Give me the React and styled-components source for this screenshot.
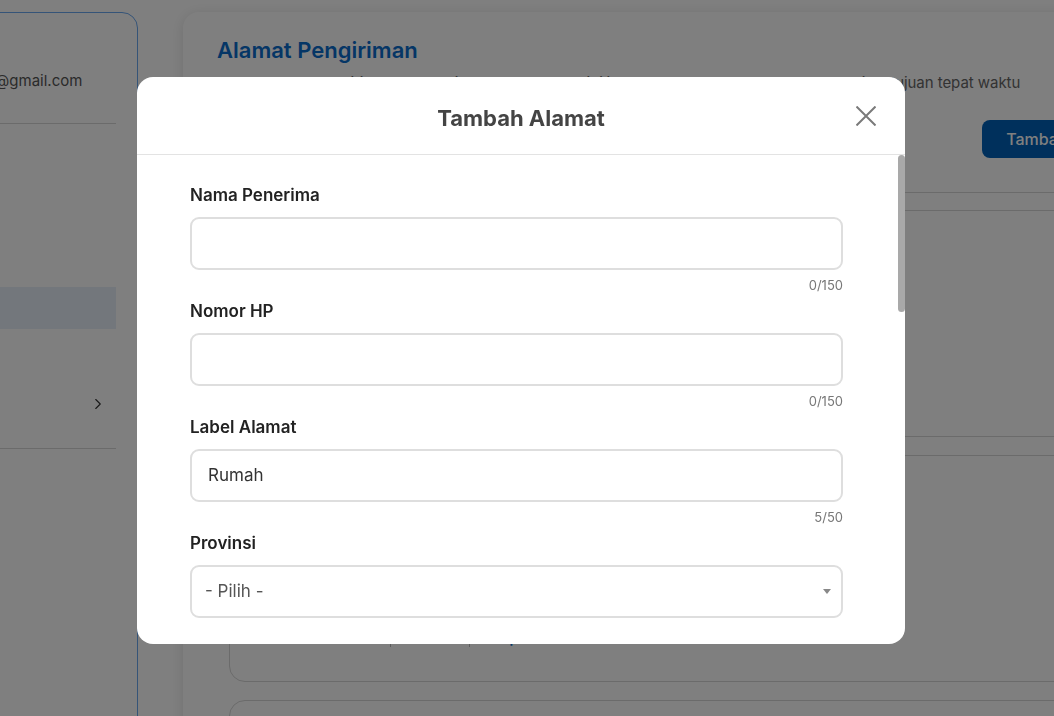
import styled, { createGlobalStyle } from 'styled-components'
import { ChevronRight } from 'lucide-react'

const GlobalStyle = createGlobalStyle`
  * { box-sizing: border-box; }
  html, body {
    margin: 0;
    padding: 0;
    background: #fff;
    font-family: Inter, "Noto Sans", sans-serif;
    overflow: hidden;
  }
`

const Page = styled.div`
  width: 1054px;
  height: 716px;
  overflow: hidden;
  display: flex;
  gap: 45px;
  padding-top: 12px;
`

const Sidebar = styled.aside`
  flex: 0 0 260px;
  margin-left: -122px;
  height: 760px;
  border: 1px solid #6aa8f0;
  border-radius: 16px;
  padding: 0 21px 0 22px;
`

const Profile = styled.div`
  display: flex;
  align-items: center;
  gap: 12px;
  padding: 29px 0 25px;
  border-bottom: 1px solid #d6d6d6;
`

const Avatar = styled.div`
  width: 56px;
  height: 56px;
  border-radius: 50%;
  background: #dfe7f1;
  flex-shrink: 0;
`

const ProfileText = styled.div`
  display: flex;
  flex-direction: column;
  white-space: nowrap;
`

const ProfileName = styled.div`
  font-size: 16px;
  line-height: 22px;
  font-weight: 600;
  color: #222;
`

const ProfileEmail = styled.div`
  font-size: 15px;
  line-height: 20px;
  color: #555;
`

const Menu = styled.nav`
  display: flex;
  flex-direction: column;
  gap: 6px;
  padding: 19px 0 23px;
  border-bottom: 1px solid #d6d6d6;
`

const MenuItem = styled.div`
  height: 42px;
  display: flex;
  align-items: center;
  justify-content: space-between;
  padding: 0 9px 0 16px;
  font-size: 15px;
  color: #333;
  white-space: nowrap;
  background: ${p => (p.$active ? '#e6eef8' : 'transparent')};
`

const Main = styled.main`
  flex: 0 0 1000px;
  height: 760px;
  border-radius: 16px;
  box-shadow: 0 2px 14px rgba(0, 0, 0, 0.12);
  padding: 24px 34px;
`

const Title = styled.h1`
  margin: 0;
  font-size: 22px;
  line-height: 28px;
  font-weight: 600;
  color: #0a6ccc;
`

const Subtitle = styled.p`
  margin: 9px 0 0;
  font-size: 15px;
  line-height: 20px;
  color: #666;
  white-space: nowrap;
  letter-spacing: -0.05px;
`

const Actions = styled.div`
  display: flex;
  justify-content: flex-end;
  margin-top: 27px;
`

const PrimaryButton = styled.button`
  height: 38px;
  padding: 0 24px;
  border: none;
  border-radius: 8px;
  background: #0060b8;
  color: #fff;
  font-family: inherit;
  font-size: 16px;
  font-weight: 500;
`

const Divider = styled.div`
  height: 1px;
  background: #d6d6d6;
  margin-top: 34px;
`

const AddressList = styled.div`
  display: flex;
  flex-direction: column;
  gap: 18px;
  margin-top: 17px;
  padding-left: 12px;
`

const AddressCard = styled.div`
  height: 227px;
  border: 1px solid #d6d6d6;
  border-radius: 16px;
  padding: 22px 30px 34px;
  display: flex;
  flex-direction: column;
  gap: 6px;
  font-size: 14px;
  color: #444;
`

const CardTag = styled.div`
  font-size: 14px;
  font-weight: 600;
  color: #333;
`

const CardName = styled.div`
  font-size: 15px;
  font-weight: 600;
  color: #222;
`

const CardLinks = styled.div`
  margin-top: auto;
  display: flex;
  align-items: center;
  gap: 21px;
  font-size: 14px;
  line-height: 18px;
`

const CardLink = styled.span`
  color: #0a6ccc;
  font-weight: 600;
`

const Sep = styled.span`
  width: 1px;
  height: 18px;
  background: #bbb;
`

const Overlay = styled.div`
  position: fixed;
  inset: 0;
  background: rgba(0, 0, 0, 0.5);
  display: flex;
  justify-content: center;
  align-items: center;
  padding: 4px 12px 0 0;
`

const Modal = styled.div`
  width: 768px;
  height: 567px;
  background: #fff;
  border-radius: 16px;
  overflow: hidden;
  display: flex;
  flex-direction: column;
`

const ModalHeader = styled.div`
  flex: 0 0 78px;
  display: grid;
  grid-template-columns: 1fr auto 1fr;
  align-items: center;
  padding: 6px 29px 0 29px;
  border-bottom: 1px solid #e3e3e3;
`

const ModalTitle = styled.h2`
  grid-column: 2;
  margin: 0;
  font-size: 22px;
  font-weight: 700;
  color: #444;
`

const CloseButton = styled.button`
  justify-self: end;
  border: none;
  background: none;
  padding: 0;
  width: 20px;
  height: 20px;
  margin-top: -5px;
  display: flex;
  cursor: pointer;
`

const ModalBody = styled.div`
  flex: 1;
  min-height: 0;
  display: flex;
`

const BodyContent = styled.div`
  flex: 1;
  overflow: hidden;
  padding: 30px 55px 40px 53px;
`

const ScrollTrack = styled.div`
  flex: 0 0 7px;
  display: flex;
  flex-direction: column;
`

const ScrollThumb = styled.div`
  height: 157px;
  border-radius: 4px;
  background: #a9a9a9;
`

const Field = styled.div`
  margin-bottom: 8px;
`

const Label = styled.label`
  display: block;
  font-size: 17px;
  line-height: 21px;
  font-weight: 600;
  color: #222;
  margin-bottom: 11px;
`

const TextInput = styled.input`
  display: block;
  width: 100%;
  height: 53px;
  border: 2px solid #dedede;
  border-radius: 9px;
  padding: 0 16px;
  font-family: inherit;
  font-size: 17px;
  color: #333;
  outline: none;
`

const TextArea = styled.textarea`
  display: block;
  width: 100%;
  height: 110px;
  border: 2px solid #dedede;
  border-radius: 9px;
  padding: 14px 16px;
  font-family: inherit;
  font-size: 17px;
  color: #333;
  resize: none;
  outline: none;
`

const Counter = styled.div`
  margin-top: 7px;
  text-align: right;
  font-size: 13px;
  line-height: 16px;
  color: #777;
`

const SelectBox = styled.div`
  height: 53px;
  border: 2px solid #dedede;
  border-radius: 9px;
  padding: 0 10px 0 13px;
  display: flex;
  align-items: center;
  justify-content: space-between;
  font-size: 17px;
  color: #555;
  margin-bottom: 24px;
`

const CheckRow = styled.label`
  display: flex;
  align-items: center;
  gap: 10px;
  font-size: 15px;
  color: #333;
  margin: 12px 0 28px;
`

const SaveButton = styled(PrimaryButton)`
  width: 100%;
  height: 48px;
`

const TextField = ({ label, value = '', max }) => (
  <Field>
    <Label>{label}</Label>
    <TextInput defaultValue={value} />
    <Counter>{value.length}/{max}</Counter>
  </Field>
)

const SelectField = ({ label }) => (
  <Field>
    <Label>{label}</Label>
    <SelectBox>
      <span>- Pilih -</span>
      <svg width="8" height="5" viewBox="0 0 8 5">
        <path d="M0 0h8L4 5z" fill="#888" />
      </svg>
    </SelectBox>
  </Field>
)

const addresses = [
  { tag: 'Rumah', name: 'Sari Wulandari', phone: '081234567890', addr: 'Jl. Melati No. 12, RT 03/RW 05, Kebayoran Baru, Jakarta Selatan' },
  { tag: 'Kantor', name: 'Sari Wulandari', phone: '081234567890', addr: 'Jl. Jend. Sudirman Kav. 52-53, Senayan, Jakarta Selatan' },
  { tag: 'Kos', name: 'Sari Wulandari', phone: '081234567890', addr: 'Jl. Kaliurang Km 5, Sleman, D.I. Yogyakarta' },
]

const App = () => {
  return <>
    <GlobalStyle />
    <Page>
      <Sidebar>
        <Profile>
          <Avatar />
          <ProfileText>
            <ProfileName>Sari</ProfileName>
            <ProfileEmail>sari@gmail.com</ProfileEmail>
          </ProfileText>
        </Profile>
        <Menu>
          <MenuItem>Profil Saya</MenuItem>
          <MenuItem>Pesanan</MenuItem>
          <MenuItem>Wishlist</MenuItem>
          <MenuItem $active>Alamat</MenuItem>
          <MenuItem>Ubah Sandi</MenuItem>
          <MenuItem>
            <span>Lainnya</span>
            <ChevronRight size={18} strokeWidth={1.5} color="#333" />
          </MenuItem>
        </Menu>
      </Sidebar>

      <Main>
        <Title>Alamat Pengiriman</Title>
        <Subtitle>Kelola alamat pengirimanmu. Pastikan alamat yang dipilih sudah benar agar pesanan sampai ke tujuan tepat waktu</Subtitle>
        <Actions>
          <PrimaryButton>Tambah Alamat</PrimaryButton>
        </Actions>
        <Divider />
        <AddressList>
          {addresses.map(a => (
            <AddressCard key={a.tag}>
              <CardTag>{a.tag}</CardTag>
              <CardName>{a.name}</CardName>
              <div>{a.phone}</div>
              <div>{a.addr}</div>
              <CardLinks>
                <CardLink>Atur Titik Lokasi</CardLink>
                <Sep />
                <CardLink>Ubah</CardLink>
                <Sep />
                <CardLink>Hapus</CardLink>
              </CardLinks>
            </AddressCard>
          ))}
        </AddressList>
      </Main>
    </Page>

    <Overlay>
      <Modal>
        <ModalHeader>
          <ModalTitle>Tambah Alamat</ModalTitle>
          <CloseButton aria-label="Tutup">
            <svg width="20" height="20" viewBox="0 0 20 20">
              <path d="M0.5 0.5l19 19M19.5 0.5l-19 19" stroke="#7a7a7a" strokeWidth="2" />
            </svg>
          </CloseButton>
        </ModalHeader>
        <ModalBody>
          <BodyContent>
            <TextField label="Nama Penerima" max={150} />
            <TextField label="Nomor HP" max={150} />
            <TextField label="Label Alamat" value="Rumah" max={50} />
            <SelectField label="Provinsi" />
            <SelectField label="Kota / Kabupaten" />
            <SelectField label="Kecamatan" />
            <SelectField label="Kelurahan" />
            <TextField label="Kode Pos" max={5} />
            <Field>
              <Label>Alamat Lengkap</Label>
              <TextArea />
              <Counter>0/500</Counter>
            </Field>
            <TextField label="Catatan untuk Kurir" max={100} />
            <CheckRow>
              <input type="checkbox" />
              Jadikan sebagai alamat utama
            </CheckRow>
            <SaveButton>Simpan</SaveButton>
          </BodyContent>
          <ScrollTrack>
            <ScrollThumb />
          </ScrollTrack>
        </ModalBody>
      </Modal>
    </Overlay>
  </>
}

export default App
